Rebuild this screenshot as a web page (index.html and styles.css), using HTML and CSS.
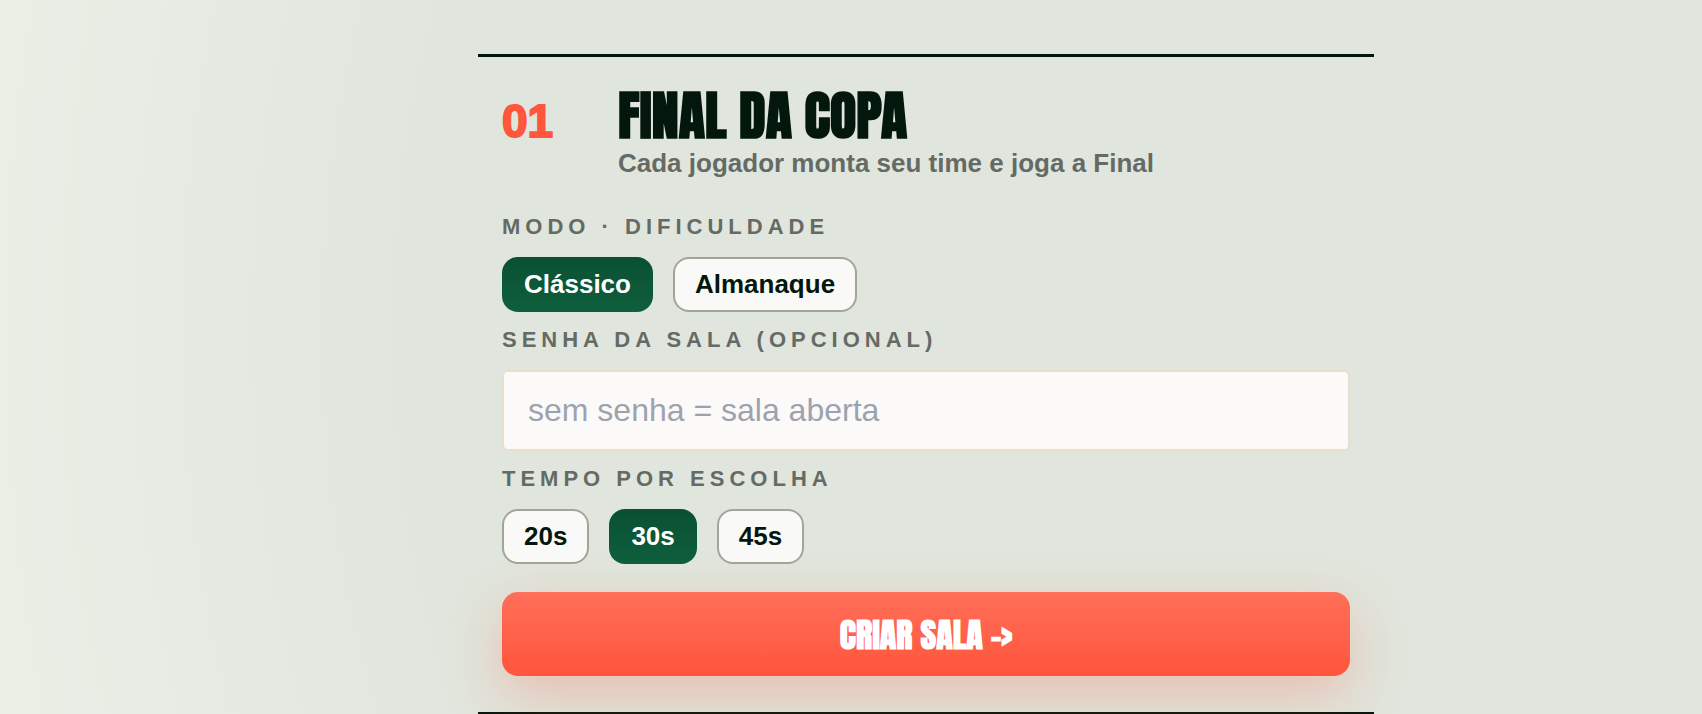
FILE: index.html
```html
<!DOCTYPE html>
<html lang="pt-BR">

<head>
    <meta charset="UTF-8">
    <meta name="viewport" content="width=device-width, initial-scale=1.0">
    <title>Final da Copa</title>
    <link rel="stylesheet" href="styles.css">
</head>

<body>
    <main class="page">
        <form class="mode">
            <header class="mode-header">
                <span class="mode-number">01</span>
                <div>
                    <h2>Final da Copa</h2>
                    <p class="subtitle">Cada jogador monta seu time e joga a Final</p>
                </div>
            </header>

            <div class="field" role="group" aria-labelledby="modo">
                <span class="label" id="modo">Modo · Dificuldade</span>
                <div class="options">
                    <button type="button" class="option active" aria-pressed="true">Clássico</button>
                    <button type="button" class="option" aria-pressed="false">Almanaque</button>
                </div>
            </div>

            <div class="field">
                <label class="label" for="senha">Senha da sala (opcional)</label>
                <input type="text" id="senha" placeholder="sem senha = sala aberta">
            </div>

            <div class="field" role="group" aria-labelledby="tempo">
                <span class="label" id="tempo">Tempo por escolha</span>
                <div class="options">
                    <button type="button" class="option" aria-pressed="false">20s</button>
                    <button type="button" class="option active" aria-pressed="true">30s</button>
                    <button type="button" class="option" aria-pressed="false">45s</button>
                </div>
            </div>

            <button type="submit" class="create">Criar sala -&gt;</button>
        </form>
    </main>
    <script>
        // One option active per group
        document.querySelectorAll('.options').forEach(function (group) {
            group.addEventListener('click', function (e) {
                if (!e.target.classList.contains('option')) return;
                group.querySelectorAll('.option').forEach(function (btn) {
                    btn.classList.toggle('active', btn === e.target);
                    btn.setAttribute('aria-pressed', btn === e.target);
                });
            });
        });
    </script>
</body>

</html>
```

FILE: styles.css
```css
* {
    box-sizing: border-box;
}

body {
    margin: 0;
    min-height: 100vh;
    font-family: Arial, "Liberation Sans", sans-serif;
    color: #04170d;
    background: radial-gradient(ellipse 1280px 1600px at 1200px 46%, #e0e6dd 60%, #e5ebe3 80%, #ebefe6 96%);
}

.page {
    padding: 54px 0 0 150px;
}

.mode {
    max-width: 896px;
    margin: 0 auto;
    padding: 28px 24px 36px;
    border-top: 3px solid #04170d;
    border-bottom: 3px solid #04170d;
}

.mode-header {
    display: grid;
    grid-template-columns: 100px 1fr;
    gap: 16px;
    margin-bottom: 32px;
}

.mode-number {
    padding-top: 8px;
    font-size: 46px;
    line-height: 56px;
    font-weight: 900;
    color: #ff563e;
    -webkit-text-stroke: 2px #ff563e;
}

h2 {
    margin: 0;
    font-family: Impact, Anton, "Roboto Condensed", sans-serif;
    font-size: 54px;
    line-height: 60px;
    font-weight: 900;
    text-transform: uppercase;
}

.subtitle {
    margin: 2px 0 0;
    font-size: 26px;
    line-height: 32px;
    font-weight: bold;
    color: #656b64;
}

.field {
    margin-bottom: 12px;
}

.label {
    display: block;
    margin-bottom: 14px;
    font-size: 22px;
    line-height: 32px;
    font-weight: bold;
    letter-spacing: 5px;
    text-transform: uppercase;
    color: #656b64;
}

.options {
    display: flex;
    gap: 20px;
}

.option {
    height: 55px;
    padding: 0 20px;
    border: 2px solid #a5a597;
    border-radius: 16px;
    background: #f9faf7;
    color: #04170d;
    font-family: inherit;
    font-size: 26px;
    font-weight: bold;
    cursor: pointer;
}

.option.active {
    border-color: transparent;
    background: linear-gradient(#0a5033, #0e5f3c) border-box;
    color: #fff;
}

input {
    display: block;
    width: 100%;
    height: 81px;
    padding: 0 24px;
    border: 2px solid #e9dfcb;
    border-radius: 6px;
    background: #fcfaf8;
    font-family: inherit;
    font-size: 32px;
}

input::placeholder {
    color: #9ca3af;
}

.create {
    display: block;
    width: 100%;
    height: 84px;
    margin-top: 28px;
    border: none;
    border-radius: 16px;
    background: linear-gradient(#ff6f59, #ff553c);
    box-shadow: 0 20px 56px rgba(255, 85, 60, 0.28);
    color: #fff;
    font-family: Impact, Anton, "Roboto Condensed", sans-serif;
    font-size: 34px;
    font-weight: 900;
    text-transform: uppercase;
    cursor: pointer;
}
```
